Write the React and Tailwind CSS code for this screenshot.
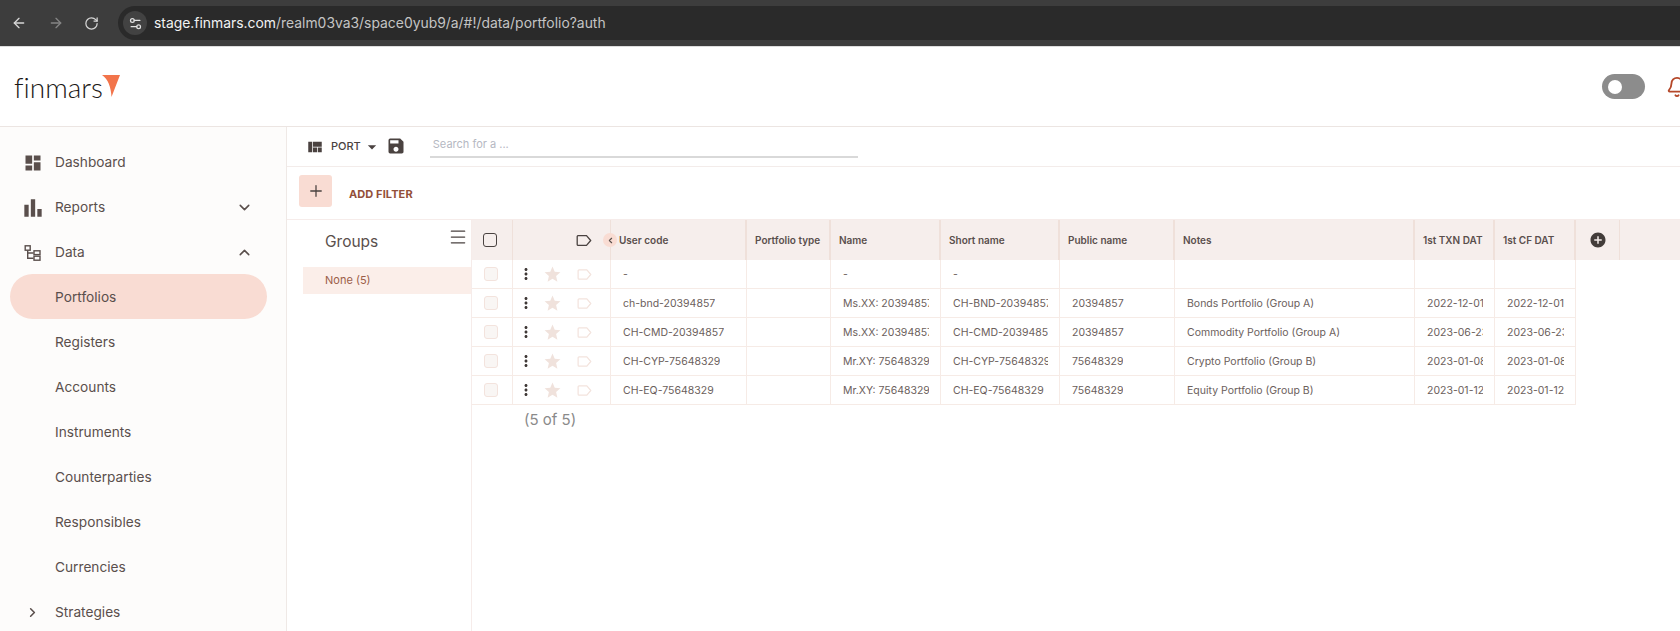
import { ArrowLeft, ArrowRight, RotateCw, Settings2, ChevronDown, ChevronUp, ChevronRight, ChevronLeft, Plus, Menu, Bell } from 'lucide-react';
import { MdDashboard, MdBarChart, MdSave, MdViewQuilt, MdArrowDropDown, MdMoreVert, MdAddCircle, MdStar } from 'react-icons/md';

function DataIcon() {
  return (
    <svg viewBox="0 0 17 16" className="w-[17px] h-[16px] shrink-0" fill="none" stroke="currentColor" strokeWidth="1.4">
      <rect x="1.2" y="0.8" width="5" height="4.4" />
      <path d="M3.7 5.2V13.2H9.5M3.7 8H9.5" />
      <rect x="10" y="5.8" width="6" height="3.8" />
      <rect x="10" y="11.2" width="6" height="4" />
    </svg>
  );
}

const NAV = [
  { label: 'Dashboard', icon: <MdDashboard size={20} className="shrink-0" /> },
  { label: 'Reports', icon: <MdBarChart size={26} className="shrink-0" />, chevron: 'down' },
  { label: 'Data', icon: <DataIcon />, chevron: 'up' },
  { label: 'Portfolios', active: true },
  { label: 'Registers' },
  { label: 'Accounts' },
  { label: 'Instruments' },
  { label: 'Counterparties' },
  { label: 'Responsibles' },
  { label: 'Currencies' },
  { label: 'Strategies', icon: <ChevronRight size={15} strokeWidth={2.5} className="shrink-0" /> },
];

const COLUMNS = [
  { label: 'User code', w: 'w-[136px]' },
  { label: 'Portfolio type', w: 'w-[84px]' },
  { label: 'Name', w: 'w-[110px]' },
  { label: 'Short name', w: 'w-[119px]' },
  { label: 'Public name', w: 'w-[115px]' },
  { label: 'Notes', w: 'w-[240px]' },
  { label: '1st TXN DAT', w: 'w-[80px]' },
  { label: '1st CF DAT', w: 'w-[81px]' },
];

const ROWS = [
  ['-', '', '-', '-', '', '', '', ''],
  ['ch-bnd-20394857', '', 'Ms.XX: 20394857', 'CH-BND-20394857', '20394857', 'Bonds Portfolio (Group A)', '2022-12-01', '2022-12-01'],
  ['CH-CMD-20394857', '', 'Ms.XX: 20394857', 'CH-CMD-20394857', '20394857', 'Commodity Portfolio (Group A)', '2023-06-23', '2023-06-23'],
  ['CH-CYP-75648329', '', 'Mr.XY: 75648329', 'CH-CYP-75648329', '75648329', 'Crypto Portfolio (Group B)', '2023-01-08', '2023-01-08'],
  ['CH-EQ-75648329', '', 'Mr.XY: 75648329', 'CH-EQ-75648329', '75648329', 'Equity Portfolio (Group B)', '2023-01-12', '2023-01-12'],
];

function LabelIcon({ className }) {
  return (
    <svg viewBox="0 0 16 11" className={className} fill="none" stroke="currentColor" strokeWidth="1.3">
      <path d="M1.2 1.6a1 1 0 0 1 1-1h8.3l4.2 4.9-4.2 4.9H2.2a1 1 0 0 1-1-1z" strokeLinejoin="round" />
    </svg>
  );
}

function BrowserBar() {
  return (
    <div className="h-[47px] bg-[#3d3d3d] border-b border-[#dddddd] flex items-center text-[#d6d6d6] shrink-0">
      <ArrowLeft size={16} className="ml-[11px]" />
      <ArrowRight size={16} className="ml-[21px] text-[#858585]" />
      <RotateCw size={15} className="ml-[20px]" />
      <div className="ml-[19px] h-[34px] flex-1 bg-[#2a2a2a] rounded-l-[17px] flex items-center pl-[5px]">
        <div className="w-[24px] h-[24px] rounded-full bg-[#424242] flex items-center justify-center">
          <Settings2 size={15} className="text-[#e2e2e2]" />
        </div>
        <div className="ml-[7px] text-[13.9px] text-[#c4c4c4] whitespace-nowrap">
          <span className="text-[#f2f2f2]">stage.finmars.com</span>/realm03va3/space0yub9/a/#!/data/portfolio?auth
        </div>
      </div>
    </div>
  );
}

function Header() {
  return (
    <div className="h-[80px] bg-white border-b border-[#ece5e2] flex items-center justify-between shrink-0 overflow-hidden">
      <div className="ml-[14px] flex items-start h-[24px]">
        <span className="text-[28px] leading-[24px] [font-variant-ligatures:none] text-[#1c1917] font-['Lato',sans-serif] font-light">finmars</span>
        <svg viewBox="0 0 18 22" className="w-[18px] h-[22px] ml-[-1px] shrink-0">
          <path d="M0 0H18L9.5 22C9 12 6 4 0 0z" fill="#f2744b" />
        </svg>
      </div>
      <div className="flex items-center mr-[-8px] gap-[21px]">
        <div className="w-[43px] h-[25px] rounded-full bg-[#8c8c8c] flex items-center pl-[6px]">
          <div className="w-[14px] h-[14px] rounded-full bg-white" />
        </div>
        <Bell size={22} strokeWidth={2} className="text-[#b5482a]" />
      </div>
    </div>
  );
}

function Sidebar() {
  return (
    <div className="w-[287px] shrink-0 bg-[#fdfcfb] border-r border-[#efe9e6] pt-[12px] overflow-hidden">
      {NAV.map((item) => (
        <div key={item.label} className={`h-[45px] pt-[2px] flex items-center text-[13.7px] text-[#5a4f4c] relative ml-[10px] w-[257px] rounded-full ${item.active ? 'bg-[#f9dcd3]' : ''}`}>
          <div className="w-[15px] ml-[15px] flex items-center justify-center">{item.icon}</div>
          <span className="ml-[15px]">{item.label}</span>
          {item.chevron === 'down' && <ChevronDown size={17} strokeWidth={2.2} className="absolute right-[14px]" />}
          {item.chevron === 'up' && <ChevronUp size={17} strokeWidth={2.2} className="absolute right-[14px]" />}
        </div>
      ))}
    </div>
  );
}

function Toolbar() {
  return (
    <div className="h-[40px] border-b border-[#f3ecea] flex items-center text-[#4a4240] shrink-0">
      <MdViewQuilt size={18} className="ml-[19px]" />
      <span className="ml-[7px] text-[11px] font-medium">PORT</span>
      <MdArrowDropDown size={20} className="ml-[1px]" />
      <MdSave size={20} className="ml-[4px] mb-[1px]" />
      <div className="ml-[24px] w-[428px] h-[28px] pt-[2px] mb-[5px] border-b-2 border-[#d9d9d9] flex items-center pl-[3px] text-[11px] text-[#b5b8c2]">
        Search for a ...
      </div>
    </div>
  );
}

function FilterRow() {
  return (
    <div className="h-[53px] border-b border-[#f6ecea] flex items-center shrink-0">
      <div className="ml-[12px] w-[33px] h-[32px] rounded-[3px] bg-[#f9dcd3] flex items-center justify-center text-[#4a4240] mb-[5px]">
        <Plus size={18} strokeWidth={1.7} />
      </div>
      <span className="ml-[17px] mt-[3px] text-[11px] font-bold text-[#934f39] tracking-[0.1px]">ADD FILTER</span>
    </div>
  );
}

function GroupsPanel() {
  return (
    <div className="w-[184px] shrink-0 pl-[16px]">
      <div className="h-[47px] pt-[10px] flex items-start justify-between text-[#5a4f4c]">
        <span className="ml-[22px] text-[15.5px] leading-[24px]">Groups</span>
        <Menu size={20} strokeWidth={1.5} className="mr-[3px] mt-[-3px] text-[#4a4240]" />
      </div>
      <div className="h-[27px] bg-[#fbeee9] flex items-center pl-[22px] text-[11px] text-[#9c5d48]">None (5)</div>
    </div>
  );
}

function Table() {
  return (
    <div className="flex-1 min-w-0 border-l border-[#f6ecea] text-[10.5px] text-[#6b605c]">
      {/* header */}
      <div className="h-[40px] bg-[#f6eeec] flex text-[#5a4f4c] font-semibold text-[10px]">
        <div className="w-[41px] flex items-center pl-[11px] border-r border-[#efe0da]">
          <div className="w-[14px] h-[14px] rounded-[3px] border-[1.5px] border-[#4a4240]" />
        </div>
        <div className="w-[98px] relative flex items-center border-r border-[#efe0da]">
          <LabelIcon className="absolute left-[63px] w-[16px] h-[11px] text-[#4a4240]" />
          <div className="absolute right-[-7px] w-[14px] h-[14px] rounded-full bg-[#f9dcd3] flex items-center justify-center z-10">
            <ChevronLeft size={9} strokeWidth={3} />
          </div>
        </div>
        {COLUMNS.map((col) => (
          <div key={col.label} className={`${col.w} shrink-0 flex items-center pl-[8px] border-r-2 border-[#efe0da] whitespace-nowrap overflow-hidden`}>
            {col.label}
          </div>
        ))}
        <div className="w-[44px] flex items-center border-r border-[#efe0da] pl-[13px]">
          <MdAddCircle size={18} className="text-[#433c3a]" />
        </div>
      </div>
      {/* rows */}
      <div className="w-[1104px]">
        {ROWS.map((row) => (
          <div key={row[0] + row[2]} className="h-[29px] flex border-b border-[#f6ebe6]">
            <div className="w-[41px] flex items-center pl-[12px] border-r border-[#f6ebe6]">
              <div className="w-[14px] h-[14px] rounded-[3px] border border-[#f3e3dd] bg-[#f9f6f4]" />
            </div>
            <div className="w-[98px] flex items-center border-r border-[#f6ebe6] relative">
              <MdMoreVert size={18} className="ml-[4px] text-[#3f3836]" />
              <MdStar size={19} className="ml-[8px] text-[#f0e2dc]" />
              <LabelIcon className="absolute left-[64px] w-[15px] h-[11px] text-[#f3e3dd]" />
            </div>
            {row.map((cell, i) => (
              <div key={COLUMNS[i].label} className={`${COLUMNS[i].w} shrink-0 pl-[12px] pr-[11px] pt-[2px] flex items-center border-r border-[#f6ebe6]`}>
                <div className="overflow-hidden whitespace-nowrap">{cell}</div>
              </div>
            ))}
          </div>
        ))}
      </div>
      <div className="mt-[4px] ml-[52px] text-[15px] text-[#8a8a8a]">(5 of 5)</div>
    </div>
  );
}

export default function App() {
  return (
    <div className="w-[1680px] h-[631px] flex flex-col overflow-hidden bg-white font-['Inter',sans-serif]">
      <BrowserBar />
      <Header />
      <div className="flex flex-1 min-h-0">
        <Sidebar />
        <div className="flex-1 min-w-0 flex flex-col">
          <Toolbar />
          <FilterRow />
          <div className="flex flex-1 min-h-0">
            <GroupsPanel />
            <Table />
          </div>
        </div>
      </div>
    </div>
  );
}
